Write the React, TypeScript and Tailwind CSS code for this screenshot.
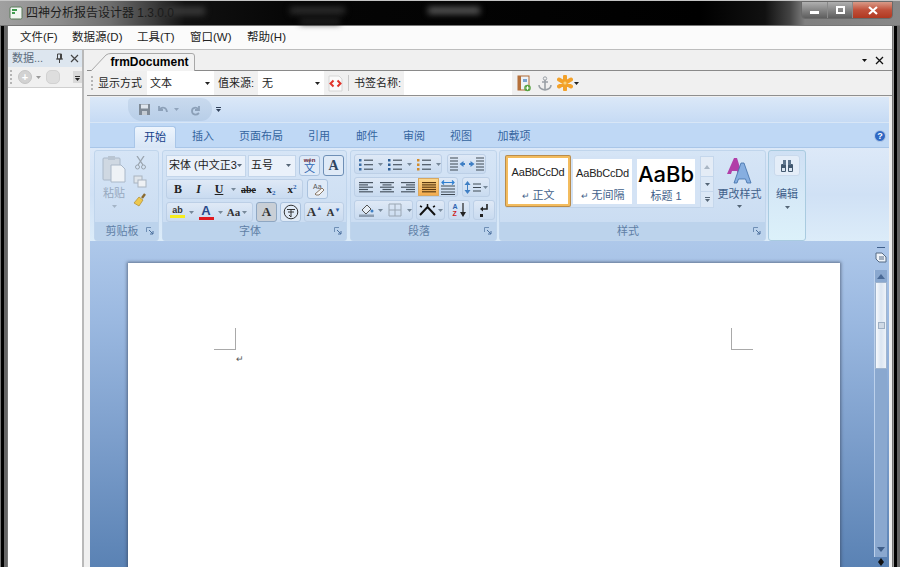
import React from "react";

const F = { fontFamily: '"Liberation Sans","Noto Sans CJK SC",sans-serif' };

function Caret({ c = "#333" }: { c?: string }) {
  return <svg width="5" height="3" viewBox="0 0 5 3" className="shrink-0"><path d="M0 0h5L2.5 3z" fill={c} /></svg>;
}

function Btn({ w, children, active }: { w: number; children?: React.ReactNode; active?: boolean }) {
  return (
    <div
      style={{ width: w }}
      className={
        "h-full flex items-center justify-center gap-[2px] " +
        (active ? "bg-gradient-to-b from-[#fbd98e] to-[#f3a94a] shadow-[inset_0_0_0_1px_#d9a860]" : "")
      }
    >
      {children}
    </div>
  );
}

function Seg({ children, className = "" }: { children: React.ReactNode; className?: string }) {
  return (
    <div className={"h-[20px] flex items-center rounded-[3px] border border-[#bccfe6] bg-gradient-to-b from-[#dfe9f6] to-[#c9dbf0] " + className}>
      {children}
    </div>
  );
}

function Launcher() {
  return (
    <svg width="8" height="8" viewBox="0 0 8 8" className="shrink-0">
      <path d="M.5 5V.5H5" fill="none" stroke="#6f8fb5" />
      <path d="M3 3l4 4M7 4v3H4" fill="none" stroke="#4a6f9c" />
    </svg>
  );
}

function Group({ w, label, launcher = true, children, ml = 3 }: { w: number; label: string; launcher?: boolean; children: React.ReactNode; ml?: number }) {
  return (
    <div
      style={{ width: w, marginLeft: ml }}
      className="h-[91px] shrink-0 flex flex-col rounded-[3px] border border-[#c0d5ec] bg-gradient-to-b from-[#d6e5f6] to-[#c8dbf1]"
    >
      <div className="h-[71px] shrink-0">{children}</div>
      <div className="flex-1 flex items-center bg-[#bcd3ec] text-[#5f7fa6] text-[11px] pl-[3px] pr-[4px]">
        <span className="flex-1 text-center">{label}</span>
        {launcher && <Launcher />}
      </div>
    </div>
  );
}

function Lines({ kind }: { kind: "left" | "center" | "right" | "just" }) {
  const rows = [0, 1, 2, 3, 4];
  return (
    <svg width="14" height="12" viewBox="0 0 14 12">
      {rows.map((i) => {
        const short = i % 2 === 1;
        const len = kind === "just" ? 14 : short ? 9 : 14;
        const x = kind === "left" || kind === "just" ? 0 : kind === "right" ? 14 - len : (14 - len) / 2;
        return <rect key={i} x={x} y={1 + i * 2.3} width={len} height="1.2" fill={kind === "just" ? "#5b3a10" : "#4a5663"} />;
      })}
    </svg>
  );
}

function ListIcon({ color = "#3d6ea5" }: { color?: string }) {
  return (
    <svg width="14" height="13" viewBox="0 0 14 13">
      {[1, 5.5, 10].map((y) => (
        <g key={y}>
          <rect x="0" y={y} width="2.5" height="2.5" fill={color} />
          <rect x="5" y={y + 0.6} width="9" height="1.2" fill="#4a5663" />
        </g>
      ))}
    </svg>
  );
}

function Indent({ flip }: { flip?: boolean }) {
  return (
    <svg width="15" height="14" viewBox="0 0 15 14" style={flip ? { transform: "scaleX(-1)" } : undefined}>
      <path d="M7 1h8M7 4h8M7 7h8M7 10h8M7 13h8" stroke="#3f4a55" strokeWidth="1.1" />
      <path d="M5.5 7L1.5 4v2H0v2h1.5v2z" fill="#3f7fc4" />
    </svg>
  );
}

function StyleCard({ sample, label, w, big, selected }: { sample: string; label: string; w: number; big?: boolean; selected?: boolean }) {
  return (
    <div
      style={{ width: w, height: selected ? 50 : 45 }}
      className={
        "shrink-0 bg-white flex flex-col items-center overflow-hidden " +
        (selected ? "border-2 border-[#f3bc5e] shadow-[0_0_0_1px_#b98c4c] rounded-[1px]" : "")
      }
    >
      {big ? (
        <div className="h-[29px] flex items-center text-[22px] leading-none font-medium text-black whitespace-nowrap" style={{ fontFamily: "Inter, sans-serif" }}>
          {sample}
        </div>
      ) : (
        <div className="h-[29px] flex items-center text-[11px] tracking-[-0.2px] leading-none text-[#222] whitespace-nowrap">{sample}</div>
      )}
      <div className="text-[11px] leading-[16px] text-[#3f5f8a] whitespace-nowrap">
        {!big && <span className="text-[9px] mr-[3px]">↵</span>}
        {label}
      </div>
    </div>
  );
}

function Chrome({ label, className = "" }: { label: string; className?: string }) {
  return <span className={"whitespace-nowrap " + className}>{label}</span>;
}

export default function App() {
  return (
    <div style={F} className="w-[900px] h-[567px] overflow-hidden flex flex-col bg-[#1a1a1a] text-[12px] text-[#222]">
      {/* title bar */}
      <div className="h-[26px] shrink-0 flex items-center bg-[linear-gradient(90deg,#a0a0a0_0px,#8c8c8c_60px,#6e6e6e_110px,#3a3a3a_155px,#111_185px,#050505_300px,#000_700px,#111_765px,#444_790px,#808080_805px,#888_900px)] border-t border-[#c4c4c4] border-b border-b-[#777] relative pl-[9px]">
        <div className="absolute left-[165px] top-[6px] w-[40px] h-[8px] bg-[#3a3a3a] blur-[3px]" />
        <div className="absolute left-[290px] top-[6px] w-[55px] h-[7px] bg-[#2f2f2f] blur-[3px]" />
        <div className="absolute left-[300px] top-[18px] w-[40px] h-[5px] bg-[#262626] blur-[3px]" />
        <div className="absolute left-[428px] top-[6px] w-[52px] h-[7px] bg-[#5a5a5a] blur-[3px]" />
        <svg width="14" height="14" viewBox="0 0 14 14" className="shrink-0 relative">
          <rect x="1" y="1" width="12" height="12" rx="1.5" fill="#f2f7f2" stroke="#5a7a5a" />
          <path d="M3 4h5M3 7h3" stroke="#3f9b4f" strokeWidth="2" />
        </svg>
        <span className="relative ml-[3px] text-[12px] text-[#1c1c1c] whitespace-nowrap">四神分析报告设计器 1.3.0.0</span>
        <div className="relative ml-auto mr-[7px] mb-[7px] flex h-[18px] w-[92px] rounded-b-[4px] border border-[#6a6a6a] overflow-hidden self-start">
          <div className="w-[26px] bg-gradient-to-b from-[#b0b0b0] to-[#5e5e5e] flex items-center justify-center border-r border-[#8a8a8a]">
            <div className="w-[9px] h-[3px] bg-white mt-[5px]" />
          </div>
          <div className="w-[25px] bg-gradient-to-b from-[#b0b0b0] to-[#5e5e5e] flex items-center justify-center border-r border-[#8a8a8a]">
            <div className="w-[9px] h-[8px] border-2 border-white" />
          </div>
          <div className="flex-1 bg-gradient-to-b from-[#d89a88] via-[#c0503a] to-[#b03820] flex items-center justify-center">
            <svg width="10" height="9" viewBox="0 0 10 9"><path d="M1 1l8 7M9 1L1 8" stroke="#fff" strokeWidth="2.2" /></svg>
          </div>
        </div>
      </div>

      {/* body with frame */}
      <div className="flex-1 min-h-0 flex">
        <div className="w-[7px] shrink-0 bg-[linear-gradient(90deg,#777_0px,#777_1px,#000_1px,#000_4px,#666_4px,#666_7px)]" />
        <div className="flex-1 min-w-0 flex flex-col bg-[#f0f0f0] border-x border-[#777]">
          {/* menu */}
          <div className="h-[24px] shrink-0 bg-[#fbfbfb] border-b border-[#bdbdbd] flex items-center pl-[12px] text-[11.5px] text-[#222]">
            <Chrome label="文件(F)" className="w-[52px]" />
            <Chrome label="数据源(D)" className="w-[65px]" />
            <Chrome label="工具(T)" className="w-[53px]" />
            <Chrome label="窗口(W)" className="w-[57px]" />
            <Chrome label="帮助(H)" />
          </div>

          <div className="flex-1 min-h-0 flex">
            {/* left dock */}
            <div className="w-[76px] shrink-0 flex flex-col border-r-2 border-[#b9b9b9]">
              <div className="h-[17px] shrink-0 bg-[#dde6ef] flex items-center pl-[4px] pr-[3px] text-[#5b6b7c] text-[11px]">
                <span className="flex-1 whitespace-nowrap overflow-hidden">数据...</span>
                <svg width="9" height="11" viewBox="0 0 9 11" className="mr-[6px]"><path d="M2.5 1h4v5h-4zM1 6h7M4.5 6v4M5.5 1v5" fill="none" stroke="#444" /></svg>
                <svg width="9" height="9" viewBox="0 0 9 9"><path d="M1 1l7 7M8 1L1 8" stroke="#444" strokeWidth="1.2" /></svg>
              </div>
              <div className="h-[21px] shrink-0 bg-[#f0f0f0] flex items-center pl-[2px] pr-[0px] border-b border-[#cfcfcf]">
                <div className="w-[2px] h-[14px] border-l-2 border-dotted border-[#b5b5b5] mr-[6px]" />
                <div className="w-[14px] h-[14px] rounded-full bg-[#d2d2d2] border border-[#c4c4c4] flex items-center justify-center text-white text-[11px] font-bold leading-none">+</div>
                <div className="ml-[4px]"><Caret c="#999" /></div>
                <div className="ml-[5px] w-[14px] h-[14px] rounded-[5px] bg-[#dedede] border border-[#d2d2d2]" />
                <div className="ml-auto w-[9px] h-[12px] bg-[#d9d9d9] flex flex-col items-center justify-end pb-[2px] gap-[1px]">
                  <div className="w-[5px] h-px bg-[#333]" />
                  <Caret c="#222" />
                </div>
              </div>
              <div className="flex-1 bg-white" />
            </div>

            {/* document host */}
            <div className="flex-1 min-w-0 flex flex-col pl-[3px]">
              <div className="h-[21px] shrink-0 flex items-end border-b border-[#8a8a8a] pr-[8px] relative">
                <div className="relative h-[18px] w-[104px] -mb-px ml-[4px] flex items-center justify-center pl-[13px] font-bold text-[12px] text-black z-10">
                  <svg width="104" height="18" viewBox="0 0 104 18" className="absolute left-0 top-0">
                    <path d="M0 18L15 2Q17 .5 20 .5H101Q103.500 .5 103.500 3V18" fill="#f2f2f2" stroke="#a8a8a8" />
                  </svg>
                  <span className="relative">frmDocument</span>
                </div>
                <div className="ml-auto mb-[5px] flex items-center gap-[8px]">
                  <Caret c="#111" />
                  <svg width="9" height="9" viewBox="0 0 9 9"><path d="M1 1l7 7M8 1L1 8" stroke="#111" strokeWidth="1.3" /></svg>
                </div>
              </div>
              {/* toolbar */}
              <div className="h-[25px] shrink-0 flex items-center pl-[4px] text-[11px] bg-[#f0f0f0] border-b border-[#8f8f8f]">
                <div className="w-[2px] h-[14px] border-l-2 border-dotted border-[#b5b5b5] mr-[5px]" />
                <span className="whitespace-nowrap w-[49px]">显示方式</span>
                <div className="w-[67px] h-[24px] bg-white flex items-center pl-[3px] pr-[4px]"><span className="flex-1">文本</span><Caret c="#222" /></div>
                <span className="whitespace-nowrap w-[44px] pl-[4px]">值来源:</span>
                <div className="w-[66px] h-[24px] bg-white flex items-center pl-[4px] pr-[4px]"><span className="flex-1">无</span><Caret c="#222" /></div>
                <svg width="17" height="17" viewBox="0 0 17 17" className="ml-[3px]">
                  <path d="M2 1h10l3 3v12H2z" fill="#fafafa" stroke="#d6d6d6" />
                  <path d="M6.500 5.500L3.500 8.500l3 3M10.500 5.500l3 3-3 3" fill="none" stroke="#e0352b" strokeWidth="2" />
                </svg>
                <div className="w-px h-[16px] bg-[#c8c8c8] ml-[4px] mr-[5px]" />
                <span className="whitespace-nowrap w-[50px]">书签名称:</span>
                <div className="w-[108px] h-[24px] bg-white" />
                <svg width="14" height="17" viewBox="0 0 14 17" className="ml-[5px]">
                  <rect x="1" y="1" width="11" height="14" fill="#eef3f8" stroke="#b06a35" />
                  <rect x="1" y="1" width="3" height="14" fill="#b5703a" />
                  <rect x="6" y="4" width="4" height="3" fill="#7aa3d0" />
                  <circle cx="10.5" cy="13" r="3.3" fill="#5aa445" />
                  <path d="M8.700 13h3.600M10.500 11.200v3.600" stroke="#fff" />
                </svg>
                <svg width="14" height="15" viewBox="0 0 14 15" className="ml-[7px]">
                  <path d="M7 4v10M4 6h6M1 9c0 3 3 4.500 6 5 3-.5 6-2 6-5" fill="none" stroke="#9aa0a6" strokeWidth="1.6" />
                  <circle cx="7" cy="2.5" r="1.7" fill="none" stroke="#9aa0a6" />
                </svg>
                <svg width="16" height="16" viewBox="0 0 16 16" className="ml-[5px]">
                  <path d="M8 1.500v13M2 4.500l12 7M14 4.500l-12 7" stroke="#f2a12a" strokeWidth="4" strokeLinecap="round" />
                  <circle cx="8" cy="8" r="1.600" fill="#f8d27a" />
                </svg>
                <div className="ml-[1px]"><Caret c="#222" /></div>
              </div>

              {/* word host */}
              <div className="flex-1 min-h-0 mt-px ml-[3px] mr-[3px] flex flex-col bg-[#bfd8f5] text-[#3f5f8a]">
                {/* qat */}
                <div className="h-[26px] shrink-0 bg-gradient-to-b from-[#dbe8f8] to-[#c6dbf4] border-b border-[#d8e6f6] flex items-center pl-[38px]">
                  <div className="h-[23px] w-[84px] rounded-r-[11px] rounded-l-[14px] rounded-tl-[4px] bg-gradient-to-b from-[#c9daee] to-[#b8cee8] flex items-center pl-[10px] gap-[5px]">
                    <svg width="13" height="13" viewBox="0 0 13 13"><path d="M1 1h11v11H1z" fill="#7f8a96" /><rect x="3" y="1.500" width="7" height="4" fill="#dfe6ee" /><rect x="4" y="8" width="5" height="4" fill="#c5ccd4" /></svg>
                    <svg width="13" height="12" viewBox="0 0 13 12"><path d="M3 2v4h4M3.500 5.500C6 2.500 10.500 3 11 8" fill="none" stroke="#8ca0b8" strokeWidth="1.8" /></svg>
                    <Caret c="#90a4bc" />
                    <svg width="13" height="12" viewBox="0 0 13 12" className="ml-[5px]"><path d="M10 2v4H6M9.500 5.500C7 2.500 3 3.500 3 7s4 5 7 2" fill="none" stroke="#8ca0b8" strokeWidth="1.8" /></svg>
                  </div>
                  <div className="ml-[4px] flex flex-col items-center gap-[1px]">
                    <div className="w-[5px] h-px bg-[#30415a]" />
                    <Caret c="#30415a" />
                  </div>
                </div>
                {/* tabs */}
                <div className="h-[24px] shrink-0 flex items-end pl-[44px] pr-[2px] bg-[#bfd8f5] text-[11px] text-[#35659f]">
                  <div className="h-[22px] w-[42px] -mb-px rounded-t-[3px] border border-b-0 border-[#a9c6e8] bg-gradient-to-b from-[#eef5fd] to-[#d8e6f6] flex items-center justify-center text-[#15428b] z-10">开始</div>
                  {[["插入", 54], ["页面布局", 62], ["引用", 54], ["邮件", 42], ["审阅", 52], ["视图", 42], ["加载项", 64]].map(([t, w]) => (
                    <div key={t as string} style={{ width: w as number }} className="h-[22px] flex items-center justify-center whitespace-nowrap">{t}</div>
                  ))}
                  <div className="ml-auto mb-[5px] mr-[1px] w-[12px] h-[12px] rounded-full bg-[#2f68c4] border border-[#b6cbe6] flex items-center justify-center text-white text-[9px] font-bold leading-none">?</div>
                </div>
                {/* ribbon */}
                <div className="h-[94px] shrink-0 flex pt-[2px] pl-[1px] bg-gradient-to-b from-[#dde9f8] via-[#d0e1f5] to-[#dcecf9] border-t border-[#a9c6e8]">
                  <Group w={65} label="剪贴板" ml={3}>
                    <div className="flex h-full pl-[6px] pt-[4px]">
                      <div className="w-[26px] flex flex-col items-center text-[#97a9be] text-[11px]">
                        <svg width="24" height="28" viewBox="0 0 24 28">
                          <rect x="1" y="3" width="17" height="22" rx="1" fill="#cfd8e2" stroke="#aab8c8" />
                          <rect x="6" y="1" width="7" height="4" fill="#b9c5d2" />
                          <path d="M9 10h10l4 4v13H9z" fill="#eef2f6" stroke="#aab8c8" />
                        </svg>
                        <span className="mt-[3px] leading-[14px]">粘贴</span>
                        <div className="mt-[5px]"><Caret c="#a4b4c6" /></div>
                      </div>
                      <div className="ml-[6px] flex flex-col items-center gap-[5px] pt-px">
                        <svg width="13" height="14" viewBox="0 0 13 14"><path d="M3 0l6 9M10 0L4 9" stroke="#9aa4ae" strokeWidth="1.3" /><circle cx="3.500" cy="11" r="2" fill="none" stroke="#9aa4ae" /><circle cx="9.500" cy="11" r="2" fill="none" stroke="#9aa4ae" /></svg>
                        <svg width="14" height="13" viewBox="0 0 14 13"><rect x="1" y="1" width="8" height="7" fill="#dfe5eb" stroke="#a9b4c0" /><rect x="5" y="5" width="8" height="7" fill="#eef1f4" stroke="#a9b4c0" /></svg>
                        <svg width="14" height="14" viewBox="0 0 14 14"><path d="M9 5l3-4" stroke="#8a6a30" strokeWidth="2.4" /><path d="M1 10l5-6 4 3-4 6z" fill="#edc84e" stroke="#b08a2e" strokeWidth=".7" /></svg>
                      </div>
                    </div>
                  </Group>
                  <Group w={185} label="字体">
                    <div className="flex flex-col pl-[3px] pt-[3px] gap-[2px]">
                      <div className="flex h-[23px] items-center">
                        <div className="w-[80px] h-[22px] bg-[#eaf1fa] border border-[#c3d5ea] flex items-center pl-[2px] pr-[3px] text-[#222] text-[11px] whitespace-nowrap">
                          <span className="flex-1">宋体 (中文正3</span><Caret c="#567" />
                        </div>
                        <div className="ml-[2px] w-[48px] h-[22px] bg-[#eaf1fa] border border-[#c3d5ea] flex items-center pl-[2px] pr-[4px] text-[#222] text-[11px]">
                          <span className="flex-1">五号</span><Caret c="#567" />
                        </div>
                        <div className="ml-[3px] w-[21px] h-[21px] border border-[#aac2de] rounded-[3px] bg-[#dfeaf7] flex flex-col items-center justify-center text-[#2c63b0] leading-none">
                          <span className="text-[6px] font-bold text-[#623]">wén</span>
                          <span className="text-[11px]">文</span>
                        </div>
                        <div className="ml-[3px] w-[21px] h-[21px] border border-[#6e8fb6] rounded-[3px] bg-[#dfeaf7] flex items-center justify-center text-[#2f4560] font-bold text-[14px] leading-none" style={{ fontFamily: '"Liberation Serif",serif' }}>A</div>
                      </div>
                      <div className="flex items-center h-[20px]">
                        <Seg className="w-[137px] text-[#222] font-bold text-[12px]">
                          <div style={{ fontFamily: '"Liberation Serif",serif' }} className="flex h-full items-center">
                            <Btn w={22}>B</Btn>
                            <Btn w={19}><i>I</i></Btn>
                            <Btn w={22}><u>U</u></Btn>
                            <Btn w={7}><Caret c="#789" /></Btn>
                            <Btn w={23}><s className="text-[10px]">abe</s></Btn>
                            <Btn w={22}><span className="text-[11px]">x<sub className="text-[7px] text-[#2c63b0]">2</sub></span></Btn>
                            <Btn w={20}><span className="text-[11px]">x<sup className="text-[7px] text-[#2c63b0]">2</sup></span></Btn>
                          </div>
                        </Seg>
                        <div className="ml-[4px] w-[21px] h-[20px] border border-[#aac2de] rounded-[3px] bg-[#dfeaf7] flex items-center justify-center">
                          <svg width="15" height="14" viewBox="0 0 15 14">
                            <text x="3" y="7" fontSize="7" fill="#555" fontFamily="Liberation Sans">Aa</text>
                            <path d="M5 12l7-6 2 2-5 5H6z" fill="#f6f6f6" stroke="#8a7a6a" />
                          </svg>
                        </div>
                      </div>
                      <div className="flex items-center h-[20px] mt-[1px]">
                        <Seg className="w-[87px] text-[#222]">
                          <Btn w={21}>
                            <div className="flex flex-col items-center leading-none">
                              <span className="text-[9px] font-bold text-[#333]">ab</span>
                              <div className="w-[15px] h-[3px] bg-[#f5ec1e]" />
                            </div>
                          </Btn>
                          <Btn w={7}><Caret c="#789" /></Btn>
                          <Btn w={22}>
                            <div className="flex flex-col items-center leading-none">
                              <span className="text-[13px] font-bold text-[#2a4a8a]">A</span>
                              <div className="w-[15px] h-[3px] bg-[#e01a20]" />
                            </div>
                          </Btn>
                          <Btn w={7}><Caret c="#789" /></Btn>
                          <Btn w={26}><span className="text-[11px] font-bold text-[#333]" style={{ fontFamily: '"Liberation Serif",serif' }}>Aa</span><Caret c="#789" /></Btn>
                        </Seg>
                        <div className="ml-[3px] w-[21px] h-[20px] border border-[#8fa7c2] rounded-[3px] bg-[#c9cfd6] flex items-center justify-center font-bold text-[13px] text-[#333]" style={{ fontFamily: '"Liberation Serif",serif' }}>A</div>
                        <div className="ml-[3px] w-[21px] h-[20px] border border-[#aac2de] rounded-[3px] bg-[#dfeaf7] flex items-center justify-center">
                          <svg width="16" height="16" viewBox="0 0 16 16"><circle cx="8" cy="8" r="6.800" fill="none" stroke="#333" /><path d="M4 5.500h8M5 8h6M8 5.500V13M6 11l2 2" fill="none" stroke="#333" /></svg>
                        </div>
                        <Seg className="ml-[3px] w-[40px] text-[#333] font-bold">
                          <div className="flex-1 flex items-center justify-center text-[13px]" style={{ fontFamily: '"Liberation Serif",serif' }}>A<span className="text-[6px] text-[#2c63b0] self-start mt-[2px]">▲</span></div>
                          <div className="flex-1 flex items-center justify-center text-[11px]" style={{ fontFamily: '"Liberation Serif",serif' }}>A<span className="text-[6px] text-[#2c63b0] self-start mt-[2px]">▼</span></div>
                        </Seg>
                      </div>
                    </div>
                  </Group>
                  <Group w={147} label="段落">
                    <div className="flex flex-col pl-[3px] pt-[3px] gap-[3px]">
                      <div className="flex items-center h-[20px]">
                        <Seg className="w-[88px]">
                          <Btn w={22}><ListIcon /></Btn><Btn w={7}><Caret c="#789" /></Btn>
                          <Btn w={22}><ListIcon color="#2f5f96" /></Btn><Btn w={7}><Caret c="#789" /></Btn>
                          <Btn w={22}><ListIcon color="#d28b2c" /></Btn><Btn w={6}><Caret c="#789" /></Btn>
                        </Seg>
                        <Seg className="ml-[5px] w-[39px]">
                          <Btn w={19}><Indent flip /></Btn><Btn w={18}><Indent /></Btn>
                        </Seg>
                      </div>
                      <div className="flex items-center h-[20px]">
                        <Seg className="w-[104px]">
                          <Btn w={21}><Lines kind="left" /></Btn>
                          <Btn w={21}><Lines kind="center" /></Btn>
                          <Btn w={21}><Lines kind="right" /></Btn>
                          <Btn w={21} active><Lines kind="just" /></Btn>
                          <Btn w={18}>
                            <svg width="14" height="15" viewBox="0 0 14 15"><path d="M0 6h14M0 9h14M0 12h14M0 14.500h14" stroke="#3f4a55" /><path d="M1 2.500h12M3 .5L1 2.500l2 2M11 .5l2 2-2 2" fill="none" stroke="#2f7fd0" strokeWidth="1.200" /></svg>
                          </Btn>
                        </Seg>
                        <Seg className="ml-[4px] w-[28px]">
                          <Btn w={26}>
                            <svg width="7" height="13" viewBox="0 0 7 13"><path d="M3.500 0L6.500 4h-6zM3.500 13L.5 9h6z" fill="#3f7fc4" /><path d="M3.500 3v7" stroke="#3f7fc4" /></svg>
                            <svg width="8" height="9" viewBox="0 0 8 9"><path d="M0 1h8M0 4.500h8M0 8h8" stroke="#3f4a55" /></svg>
                            <Caret c="#789" />
                          </Btn>
                        </Seg>
                      </div>
                      <div className="flex items-center h-[20px]">
                        <Seg className="w-[59px]">
                          <Btn w={22}>
                            <svg width="15" height="14" viewBox="0 0 15 14"><path d="M3 7l5-5 4 4-5 5z" fill="#e6edf5" stroke="#555" /><rect x="0" y="11.500" width="15" height="2.500" fill="#8d9db0" /><circle cx="13" cy="8" r="1.500" fill="#3f7fc4" /></svg>
                          </Btn>
                          <Btn w={7}><Caret c="#789" /></Btn>
                          <Btn w={22}>
                            <svg width="14" height="14" viewBox="0 0 14 14"><path d="M1 1h12v12H1zM7 1v12M1 7h12" fill="none" stroke="#9aa6b3" /></svg>
                          </Btn>
                          <Btn w={6}><Caret c="#789" /></Btn>
                        </Seg>
                        <Seg className="ml-[3px] w-[29px]">
                          <Btn w={27}>
                            <svg width="17" height="12" viewBox="0 0 17 12"><path d="M1 11l7.500-8L16 11" fill="none" stroke="#111" strokeWidth="2" /><path d="M1 2l2 1M14 3l2-1M8.500 0v2" stroke="#111" strokeWidth="1.500" /></svg>
                            <Caret c="#789" />
                          </Btn>
                        </Seg>
                        <Seg className="ml-[3px] w-[22px]">
                          <Btn w={20}>
                            <span className="flex flex-col text-[7px] font-bold leading-[7px]"><span className="text-[#2c63b0]">A</span><span className="text-[#c22]">Z</span></span>
                            <svg width="6" height="14" viewBox="0 0 6 14"><path d="M3 0v11" stroke="#222" strokeWidth="1.200" /><path d="M0 9h6l-3 5z" fill="#222" /></svg>
                          </Btn>
                        </Seg>
                        <Seg className="ml-[3px] w-[22px]">
                          <Btn w={20}>
                            <svg width="10" height="14" viewBox="0 0 10 14"><path d="M8 1v5H3" fill="none" stroke="#222" strokeWidth="1.600" /><path d="M4 3.500L1 6l3 2.500z" fill="#222" /><rect x="1" y="11" width="3" height="3" fill="#222" /></svg>
                          </Btn>
                        </Seg>
                      </div>
                    </div>
                  </Group>
                  <Group w={267} label="样式" ml={2}>
                    <div className="flex h-full pl-[6px] pt-[5px]">
                      <div className="w-[206px] h-[52px] flex items-start gap-[3px] bg-[#d4e3f5] border-b border-[#c0d3e9] pr-[3px]">
                        <StyleCard sample="AaBbCcDd" label="正文" w={64} selected />
                        <div className="mt-[3px] flex gap-[5px]">
                          <StyleCard sample="AaBbCcDd" label="无间隔" w={59} />
                          <StyleCard sample="AaBb" label="标题 1" w={58} big />
                        </div>
                      </div>
                      <div className="w-[14px] h-[52px] -ml-[11px] flex flex-col border border-[#c5d7ec] bg-[#dce8f6]">
                        <div className="h-[20px] border-b border-[#c5d7ec] flex items-center justify-center bg-[#e4ecf6]"><svg width="6" height="4" viewBox="0 0 6 4"><path d="M0 4h6L3 0z" fill="#a9b6c4" /></svg></div>
                        <div className="h-[15px] border-b border-[#c5d7ec] flex items-center justify-center"><Caret c="#567" /></div>
                        <div className="flex-1 flex flex-col items-center justify-center gap-px"><div className="w-[5px] h-px bg-[#567]" /><Caret c="#567" /></div>
                      </div>
                      <div className="w-[51px] flex flex-col items-center text-[11px] leading-[14px] pt-[1px] text-[#3f5f8a]">
                        <svg width="28" height="27" viewBox="0 0 28 27">
                          <path d="M1 17L8 1h3l5 16h-4l-1-3H6l-1 3z" fill="#b13fa8" />
                          <path d="M8 26L15 6h3l7 20h-4l-1.500-4h-7L11 26z" fill="#86aee0" stroke="#3f6ea8" strokeWidth=".8" />
                        </svg>
                        <span className="mt-[3px] whitespace-nowrap">更改样式</span>
                        <div className="mt-[4px]"><Caret c="#567" /></div>
                      </div>
                    </div>
                  </Group>
                  <div className="ml-[2px] w-[38px] h-[91px] shrink-0 rounded-[3px] border border-[#a9cbe0] bg-gradient-to-b from-[#cfe0f4] to-[#dcf1fa] flex flex-col items-center pt-[4px] text-[11px] text-[#3f5f8a]">
                    <div className="w-[26px] h-[21px] rounded-[3px] bg-[#e4edf8] border border-[#c9d9ec] flex items-center justify-center">
                      <svg width="14" height="12" viewBox="0 0 14 12"><rect x="1" y="4" width="5" height="8" rx="1" fill="#42586f" /><rect x="8" y="4" width="5" height="8" rx="1" fill="#42586f" /><rect x="3" y="0" width="3" height="5" fill="#5d748c" /><rect x="8" y="0" width="3" height="5" fill="#5d748c" /><rect x="2" y="8" width="3" height="3" fill="#dbe6f2" /><rect x="9" y="8" width="3" height="3" fill="#dbe6f2" /></svg>
                    </div>
                    <span className="mt-[11px] leading-[14px]">编辑</span>
                    <div className="mt-[5px]"><Caret c="#567" /></div>
                  </div>
                </div>

                {/* doc area */}
                <div className="flex-1 min-h-0 flex bg-[linear-gradient(180deg,#aec8ea_0%,#9ab8e0_25%,#7d9fcc_60%,#5a82b4_100%)]">
                  <div className="flex-1 min-w-0 pt-[22px] pl-[38px] pr-[34px] overflow-hidden">
                    <div className="h-[320px] bg-white shadow-[0_0_3px_1px_rgba(50,60,80,0.6)] pl-[86px] pr-[87px] pt-[65px]">
                      <div className="flex justify-between">
                        <div className="w-[22px] h-[22px] border-r border-b border-[#a9a9a9]" />
                        <div className="w-[22px] h-[22px] border-l border-b border-[#a9a9a9]" />
                      </div>
                      <div className="pl-[22px] mt-[3px] text-[9px] leading-[12px] text-[#555]">↵</div>
                    </div>
                  </div>
                  <div className="w-[13px] shrink-0 flex flex-col items-center mr-[1px]">
                    <div className="w-[8px] h-px bg-[#3f5f8a] mt-[6px]" />
                    <svg width="12" height="11" viewBox="0 0 12 11" className="mt-[4px]"><path d="M1 1h6l4 4v5H4L1 7z" fill="#eef3f9" stroke="#556a84" /><path d="M4 5h5M4 7h5" stroke="#556a84" /></svg>
                    <div className="mt-[7px] flex-1 w-[13px] bg-[#8aa8cf] flex flex-col border-l border-[#bcd1ec]">
                      <div className="h-[12px] flex items-center justify-center"><svg width="8" height="5" viewBox="0 0 8 5"><path d="M0 5h8L4 0z" fill="#4a6a96" /></svg></div>
                      <div className="h-[87px] bg-gradient-to-r from-[#f6f9fd] via-[#dbe5f1] to-[#eef3f9] border border-[#9fb4ce] flex items-center justify-center">
                        <div className="w-[7px] h-[7px] border border-[#9fb0c4] bg-[#cfd9e5]" />
                      </div>
                      <div className="flex-1 flex items-end justify-center pb-[5px]"><svg width="8" height="5" viewBox="0 0 8 5"><path d="M0 0h8L4 5z" fill="#3f5f8a" /></svg></div>
                    </div>
                    <div className="h-[10px] w-[13px] flex justify-center items-center bg-[#5a82b4]"><svg width="6" height="8" viewBox="0 0 6 8"><path d="M3 0L6 4H0zM3 8L0 4h6z" fill="#111" /></svg></div>
                  </div>
                  <div className="w-[1px]" />
                </div>
              </div>
            </div>
          </div>
        </div>
        <div className="w-[7px] shrink-0 bg-[linear-gradient(90deg,#999_0px,#999_1px,#000_1px,#000_4px,#666_4px,#666_7px)]" />
      </div>
    </div>
  );
}
